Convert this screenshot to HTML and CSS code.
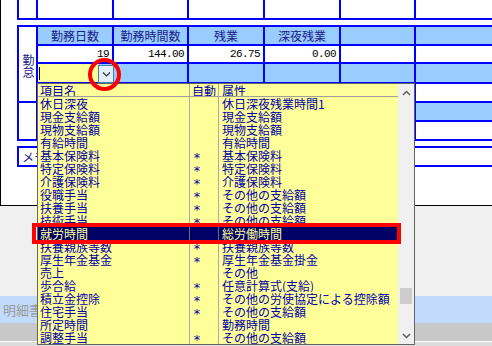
FILE: index.html
```html
<!DOCTYPE html>
<html lang="ja">
<head>
    <meta charset="UTF-8">
    <title>勤怠項目設定</title>
    <link rel="stylesheet" href="styles.css">
</head>
<body>
    <div class="screen">
        <div class="panel">
            <div class="grid top-grid">
                <div class="cell"></div>
                <div class="cell"></div>
                <div class="cell"></div>
                <div class="cell"></div>
                <div class="cell"></div>
                <div class="cell"></div>
                <div class="cell"></div>
            </div>

            <div class="grid att-grid">
                <div class="cell side-label">勤<br>怠</div>
                <div class="cell head">勤務日数</div>
                <div class="cell head">勤務時間数</div>
                <div class="cell head">残業</div>
                <div class="cell head">深夜残業</div>
                <div class="cell head"></div>
                <div class="cell head"></div>

                <div class="cell num">19</div>
                <div class="cell num">144.00</div>
                <div class="cell num">26.75</div>
                <div class="cell num">0.00</div>
                <div class="cell num"></div>
                <div class="cell num"></div>

                <div class="cell head combo-cell">
                    <div class="combo-input"><span class="caret"></span></div>
                    <div class="combo-btn">
                        <svg width="9" height="5" viewBox="0 0 9 5"><polyline points="1,0.5 4.5,4 8,0.5" fill="none" stroke="#333" stroke-width="1.2"/></svg>
                    </div>
                </div>
                <div class="cell head"></div>
                <div class="cell head"></div>
                <div class="cell head"></div>
                <div class="cell head"></div>
                <div class="cell head"></div>

                <div class="cell"></div>
                <div class="cell"></div>
                <div class="cell"></div>
                <div class="cell"></div>
                <div class="cell"></div>
                <div class="cell"></div>

                <div class="cell side-label low"></div>
                <div class="cell head"></div>
                <div class="cell head"></div>
                <div class="cell head"></div>
                <div class="cell head"></div>
                <div class="cell head"></div>
                <div class="cell head"></div>

                <div class="cell"></div>
                <div class="cell"></div>
                <div class="cell"></div>
                <div class="cell"></div>
                <div class="cell"></div>
                <div class="cell"></div>
            </div>

            <div class="memo">
                <div class="memo-cell">メモ</div>
            </div>
        </div>

        <div class="below">
            <div class="tabbar"><span>明細書印刷</span></div>
            <div class="status"></div>
            <div class="hscroll"></div>
        </div>

        <!-- dropdown list of the combo -->
        <div class="dropdown">
            <div class="list">
                <div class="row list-head"><span>項目名</span><span>自動</span><span>属性</span></div>
                <div class="row"><span>休日深夜</span><span></span><span>休日深夜残業時間1</span></div>
                <div class="row"><span>現金支給額</span><span></span><span>現金支給額</span></div>
                <div class="row"><span>現物支給額</span><span></span><span>現物支給額</span></div>
                <div class="row"><span>有給時間</span><span></span><span>有給時間</span></div>
                <div class="row"><span>基本保険料</span><span>*</span><span>基本保険料</span></div>
                <div class="row"><span>特定保険料</span><span>*</span><span>特定保険料</span></div>
                <div class="row"><span>介護保険料</span><span>*</span><span>介護保険料</span></div>
                <div class="row"><span>役職手当</span><span>*</span><span>その他の支給額</span></div>
                <div class="row"><span>扶養手当</span><span>*</span><span>その他の支給額</span></div>
                <div class="row"><span>技術手当</span><span>*</span><span>その他の支給額</span></div>
                <div class="row selected"><span>就労時間</span><span></span><span>総労働時間</span></div>
                <div class="row"><span>扶養親族等数</span><span>*</span><span>扶養親族等数</span></div>
                <div class="row"><span>厚生年金基金</span><span>*</span><span>厚生年金基金掛金</span></div>
                <div class="row"><span>売上</span><span></span><span>その他</span></div>
                <div class="row"><span>歩合給</span><span>*</span><span>任意計算式(支給)</span></div>
                <div class="row"><span>積立金控除</span><span>*</span><span>その他の労使協定による控除額</span></div>
                <div class="row"><span>住宅手当</span><span>*</span><span>その他の支給額</span></div>
                <div class="row"><span>所定時間</span><span></span><span>勤務時間</span></div>
                <div class="row"><span>調整手当</span><span>*</span><span>その他の支給額</span></div>
            </div>
            <div class="vscroll">
                <div class="arrow">
                    <svg width="9" height="6" viewBox="0 0 9 6"><polyline points="1,5 4.5,1.5 8,5" fill="none" stroke="#606060" stroke-width="1.5"/></svg>
                </div>
                <div class="track"><div class="thumb"></div></div>
                <div class="arrow">
                    <svg width="9" height="6" viewBox="0 0 9 6"><polyline points="1,1 4.5,4.5 8,1" fill="none" stroke="#606060" stroke-width="1.5"/></svg>
                </div>
            </div>
        </div>

        <div class="mark-ring"></div>
        <div class="mark-box"></div>
    </div>
</body>
</html>
```

FILE: styles.css
```css
* {
    margin: 0;
    padding: 0;
    box-sizing: border-box;
}

body {
    background: #f0f0f0;
    font-family: "Noto Sans CJK JP", "Noto Sans", sans-serif;
    font-size: 12px;
    overflow: hidden;
}

.screen {
    position: relative;
    width: 492px;
    height: 346px;
    overflow: hidden;
}

.panel {
    height: 206px;
    background: #fff;
    border-left: 1px solid #000;
    border-bottom: 1px solid #000;
}

.grid {
    display: grid;
    grid-template-columns: 17px 74px 73px 74px 74px 73px 90px;
    gap: 2px;
    background: #0000ff;
    margin-left: 16px;
    width: 495px;
    padding-left: 2px;
}

.top-grid {
    grid-template-rows: 18px;
    padding-bottom: 2px;
}

.att-grid {
    margin-top: 5px;
    padding: 2px 0 2px 2px;
    grid-template-rows: 17px 16px 18px 17px 17px 17px;
}

.cell {
    background: #fff;
    color: #1a1a8a;
    line-height: 16px;
}

.cell.head {
    background: #99ccff;
    text-align: center;
    line-height: 17px;
}

.cell.num {
    text-align: right;
    padding-right: 3px;
    color: #000;
    font-family: "Liberation Mono", monospace;
    font-size: 11px;
    letter-spacing: -0.6px;
    line-height: 17px;
}

.side-label {
    grid-row: span 4;
    display: flex;
    align-items: center;
    justify-content: center;
    padding: 4px 0 0 2px;
    line-height: 12px;
}

.side-label.low {
    grid-row: span 2;
}

.combo-cell {
    display: flex;
    align-items: stretch;
}

.combo-input {
    flex: 1;
    background: #ffff99;
    position: relative;
}

.caret {
    position: absolute;
    left: 1px;
    top: 3px;
    width: 1px;
    height: 13px;
    background: #000;
}

.combo-btn {
    width: 16px;
    margin: 1px -2px -1px 0;
    background: #e3eefa;
    border: 1px solid #3c7fb1;
    display: flex;
    align-items: center;
    justify-content: center;
}

.memo {
    margin: 5px 0 0 16px;
    width: 480px;
    background: #0000ff;
    padding: 2px 0 2px 2px;
}

.memo-cell {
    background: #fff;
    height: 17px;
    line-height: 17px;
    padding-left: 3px;
    color: #1a1a8a;
}

.below {
    padding-top: 90px;
}

.tabbar {
    height: 27px;
    background: #c2dbfc;
    color: #9a9a9a;
    font-size: 13px;
    line-height: 27px;
    padding-left: 3px;
}

.status {
    height: 18px;
    background: #c8c8c8;
}

.hscroll {
    height: 5px;
    border-top: 1px solid #fff;
    background: #dcdcdc;
}

.dropdown {
    position: absolute;
    left: 37px;
    top: 83px;
    width: 378px;
    height: 262px;
    border: 1px solid #646464;
    display: flex;
}

.list {
    flex: 1;
    background: #ffff99;
    color: #0000a8;
}

.row {
    display: grid;
    grid-template-columns: 152px 29px 1fr;
    height: 13px;
    line-height: 13px;
    white-space: nowrap;
}

.row span {
    border-right: 1px solid #a8a8c0;
    padding-left: 2px;
    overflow: hidden;
}

.row span:last-child {
    border-right: none;
    padding-left: 3px;
}

.row span:nth-child(2) {
    font-family: "DejaVu Sans Mono", monospace;
    font-size: 13px;
    line-height: 17px;
    padding-left: 3px;
}

.list-head span:nth-child(2) {
    font-family: "Noto Sans CJK JP", sans-serif;
    font-size: 12px;
    line-height: 13px;
    padding-left: 2px;
}

.list-head {
    border-bottom: 1px solid #a0a0a0;
}

.row.selected {
    background: #000066;
    color: #ffff99;
}

.row.selected span {
    border-right-color: #707070;
}

.vscroll {
    width: 16px;
    background: #f0f0f0;
    display: flex;
    flex-direction: column;
}

.arrow {
    height: 17px;
    display: flex;
    align-items: center;
    justify-content: center;
}

.track {
    flex: 1;
    padding: 187px 2px 0;
}

.thumb {
    height: 16px;
    background: #cdcdcd;
}

.mark-ring {
    position: absolute;
    left: 88px;
    top: 58px;
    width: 33px;
    height: 33px;
    border: 4px solid #ff0000;
    border-radius: 50%;
}

.mark-box {
    position: absolute;
    left: 32px;
    top: 223px;
    width: 369px;
    height: 21px;
    border: 4px solid #ff0000;
}
```
